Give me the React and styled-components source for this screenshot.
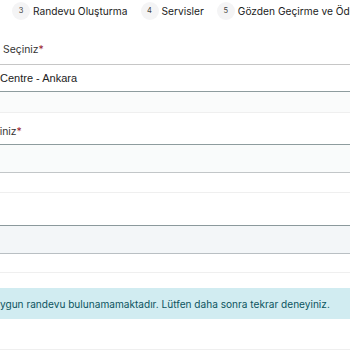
import React from 'react';
import styled, { createGlobalStyle } from 'styled-components';

const GlobalStyle = createGlobalStyle`
    html, body {
        margin: 0;
        padding: 0;
        background: #ffffff;
    }
    body {
        font-family: Inter, "Noto Sans", sans-serif;
        color: #212529;
        overflow: hidden;
    }
`;

const Page = styled.div`
    width: 350px;
    height: 350px;
    overflow: hidden;
    display: flex;
    flex-direction: column;
`;

const Stepper = styled.div`
    height: 21px;
    display: flex;
    align-items: center;
    gap: 13px;
    padding-left: 12px;
    white-space: nowrap;
`;

const Step = styled.div`
    display: flex;
    align-items: center;
    gap: 3px;
    font-size: 10.2px;
    color: #1c1c1c;
`;

const StepNum = styled.span`
    width: 18px;
    height: 18px;
    border-radius: 50%;
    background: #f4f4f5;
    display: flex;
    align-items: center;
    justify-content: center;
    font-size: 7.5px;
    color: #444;
`;

const Group = styled.div`
    display: flex;
    flex-direction: column;
    padding-top: ${({ top }) => top}px;
    border-bottom: 1px solid #efefef;
`;

const Label = styled.div`
    height: 14px;
    line-height: 14px;
    font-size: 10.4px;
    color: #333;
    white-space: nowrap;
    margin-left: ${({ shift }) => shift || 0}px;
    margin-bottom: ${({ gap }) => gap}px;

    span {
        color: #9b1c31;
    }
`;

const SelectBox = styled.div`
    height: ${({ h }) => h}px;
    border-top: 1px solid ${({ topColor }) => topColor};
    border-bottom: 1px solid ${({ bottomColor }) => bottomColor};
    background: ${({ bg }) => bg};
    display: flex;
    align-items: center;
    font-family: "Liberation Sans", Arial, sans-serif;
    font-size: 11px;
    color: #222;
    white-space: nowrap;
`;

const Strip = styled.div`
    height: ${({ h }) => h}px;
    background: ${({ bg }) => bg || '#ffffff'};
`;

const Alert = styled.div`
    height: 31px;
    background: #d1ecf1;
    color: #0c5460;
    display: flex;
    align-items: center;
    font-size: 10.1px;
    white-space: nowrap;
`;

const AlertText = styled.span`
    margin-left: -6px;
`;

const steps = [
    { n: 3, label: 'Randevu Oluşturma' },
    { n: 4, label: 'Servisler' },
    { n: 5, label: 'Gözden Geçirme ve Ödeme' },
];

const App = () => {
    return (
        <>
            <GlobalStyle />
            <Page>
                <Stepper>
                    {steps.map((s) => (
                        <Step key={s.n}>
                            <StepNum>{s.n}</StepNum>
                            {s.label}
                        </Step>
                    ))}
                </Stepper>

                <Group top={22}>
                    <Label shift={3} gap={7}>Seçiniz<span>*</span></Label>
                    <SelectBox h={26} topColor="#c6c6c6" bottomColor="#8e9c9e" bg="#ffffff">
                        Centre - Ankara
                    </SelectBox>
                    <Strip h={20} bg="#fafbfb" />
                </Group>

                <Group top={12}>
                    <Label shift={-19} gap={5}>Seçiniz<span>*</span></Label>
                    <SelectBox h={27} topColor="#8e9c9e" bottomColor="#c2c6c8" bg="#f9fbfb" />
                    <Strip h={19} />
                </Group>

                <Group top={0}>
                    <Strip h={32} />
                    <SelectBox h={27} topColor="#8b999c" bottomColor="#b9bfc3" bg="#f3f6f8" />
                    <Strip h={18} />
                </Group>

                <Group top={0}>
                    <Strip h={15} />
                    <Alert>
                        <AlertText>uygun randevu bulunamamaktadır. Lütfen daha sonra tekrar deneyiniz.</AlertText>
                    </Alert>
                    <Strip h={30} />
                </Group>
            </Page>
        </>
    );
};

export default App;
